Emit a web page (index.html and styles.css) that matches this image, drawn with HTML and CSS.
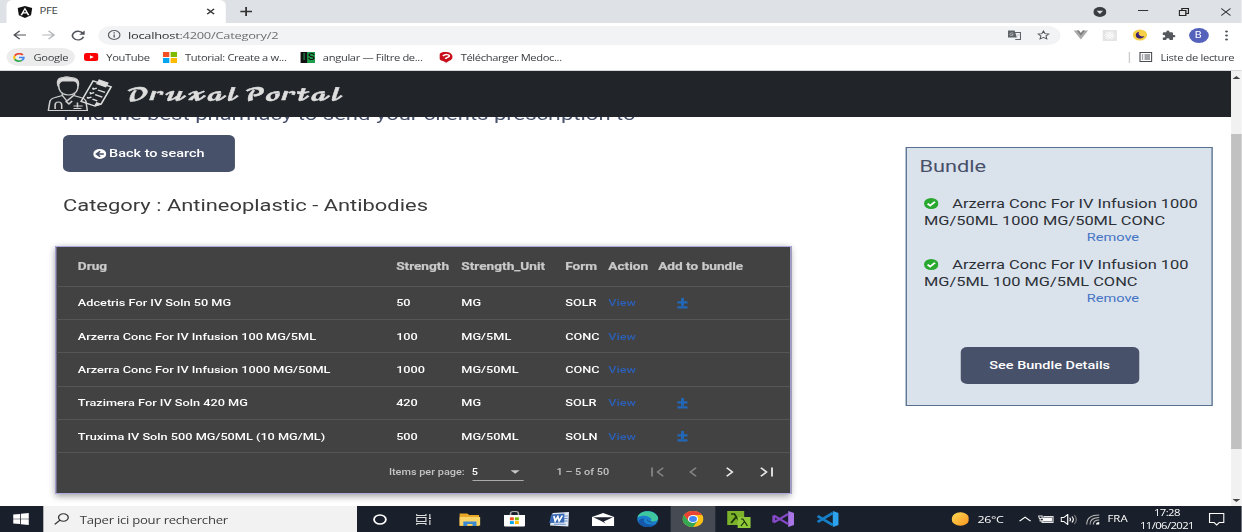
FILE: index.html
```html
<!DOCTYPE html>
<html lang="fr">
<head>
<meta charset="utf-8">
<title>PFE</title>
<link rel="stylesheet" href="styles.css">
</head>
<body>
<div class="screen">
  <header class="tabs">
    <div class="tab">
      <svg class="tab-logo" width="12" height="12" viewBox="0 0 24 24"><path d="M12 0 1 4l1.700 14.500L12 24l9.300-5.500L23 4z" fill="#111"/><path d="M12 3 5 18.500h2.800l1.400-3.500h5.600l1.400 3.500H19zm0 5.200 1.900 4.500h-3.800z" fill="#fff"/></svg>
      <span class="tab-title">PFE</span>
      <svg class="tab-close" width="7" height="7" viewBox="0 0 8 8"><path d="m1 1 6 6M7 1 1 7" stroke="#333" stroke-width="1.500"/></svg>
    </div>
    <svg class="tab-new" width="9" height="11" viewBox="0 0 10 10"><path d="M5 0v10M0 5h10" stroke="#333" stroke-width="1.500"/></svg>
    <div class="window-controls">
      <svg width="10" height="10" viewBox="0 0 12 12"><circle cx="6" cy="6" r="6" fill="#3a3d42"/><path d="M3 4.500h6L6 8.500z" fill="#dee1e6"/></svg>
      <svg width="8" height="10" viewBox="0 0 8 10"><path d="M0 3.500h8" stroke="#333"/></svg>
      <svg width="8" height="8" viewBox="0 0 8 8"><path d="M.5 2.500h5v5h-5zM2.500 2.500v-2h5v5h-2" fill="none" stroke="#222"/></svg>
      <svg width="8" height="8" viewBox="0 0 8 8"><path d="m.5.5 7 7M7.500.5l-7 7" stroke="#222" stroke-width=".9"/></svg>
    </div>
  </header>

  <div class="toolbar">
    <svg width="10" height="10" viewBox="0 0 10 10"><path d="M9.800 5H1M5 .8.800 5 5 9.200" fill="none" stroke="#50545a" stroke-width="1.200"/></svg>
    <svg width="10" height="10" viewBox="0 0 10 10"><path d="M.2 5H9M5 .8 9.200 5 5 9.200" fill="none" stroke="#b4b6b9" stroke-width="1.200"/></svg>
    <svg width="11" height="11" viewBox="0 0 11 11"><path d="M9.300 3.600A4.300 4.300 0 1 0 9.600 6.800" fill="none" stroke="#50545a" stroke-width="1.300"/><path d="M10.500.6v4.200H6.300z" fill="#50545a"/></svg>
    <div class="address">
      <svg width="10" height="10" viewBox="0 0 10 10"><circle cx="5" cy="5" r="4.400" fill="none" stroke="#5f6368"/><path d="M5 4.400v3M5 2.300v1.200" stroke="#5f6368" stroke-width="1.100"/></svg>
      <span class="url">localhost<span class="url-path">:4200/Category/2</span></span>
      <svg class="translate" width="10" height="10" viewBox="0 0 10 10"><path d="M3.500 2.500h6v7h-4" fill="#f1f3f4" stroke="#5f6368" stroke-width=".8"/><path d="M0 .5h5l1.800 7H0z" fill="#5f6368"/><path d="M4 3H2.500a1.300 1.300 0 1 0 1.400 1.500H2.800M6.500 5h2.300M7.600 4.200c0 1.600-.5 2.500-1.300 3.200" fill="none" stroke="#c8cacc" stroke-width=".6"/></svg>
      <svg width="10" height="10" viewBox="0 0 24 24"><path d="m12 2.500 2.900 6.300 6.900.8-5.100 4.700 1.400 6.900-6.100-3.500-6.100 3.500 1.400-6.900L2.200 9.600l6.900-.8z" fill="none" stroke="#50545a" stroke-width="2"/></svg>
    </div>
    <div class="extensions">
      <svg width="11" height="10" viewBox="0 0 11 10"><path d="M0 .5h3.800l1.700 3 1.700-3H11l-5.500 9z" fill="#aaa"/><path d="M2.400.5h1.700l1.400 2.400L6.900.5h1.700L5.500 5.800z" fill="#7e7e7e"/></svg>
      <svg width="11" height="11" viewBox="0 0 11 11"><path d="M0 0h11v11H0z" fill="#e4e4e4"/><circle cx="5.500" cy="5.500" r="1" fill="#fff"/><g fill="none" stroke="#fff" stroke-width=".6"><ellipse cx="5.500" cy="5.500" rx="4" ry="1.600"/><ellipse cx="5.500" cy="5.500" rx="4" ry="1.600" transform="rotate(60 5.500 5.500)"/><ellipse cx="5.500" cy="5.500" rx="4" ry="1.600" transform="rotate(120 5.500 5.500)"/></g></svg>
      <svg width="11" height="12" viewBox="0 0 12 12"><circle cx="6" cy="6" r="6" fill="#f5cf45"/><path d="M5.500 2.500A3.700 3.700 0 1 0 9.800 7.200 3.300 3.300 0 0 1 5.500 2.500z" fill="#3c1f6e"/></svg>
      <svg width="11" height="11" viewBox="0 0 24 24"><path d="M20.500 11H19V7a2 2 0 0 0-2-2h-4V3.500a2.500 2.500 0 0 0-5 0V5H4a2 2 0 0 0-2 2v3.800h1.500a2.700 2.700 0 0 1 0 5.400H2V20a2 2 0 0 0 2 2h3.800v-1.500a2.700 2.700 0 0 1 5.400 0V22H17a2 2 0 0 0 2-2v-4h1.500a2.500 2.500 0 0 0 0-5z" fill="#55585d"/></svg>
      <span class="avatar">B</span>
      <svg class="menu" width="3" height="11" viewBox="0 0 3 11"><g fill="#50545a"><circle cx="1.500" cy="1.500" r="1.100"/><circle cx="1.500" cy="5.500" r="1.100"/><circle cx="1.500" cy="9.500" r="1.100"/></g></svg>
    </div>
  </div>

  <nav class="bookmarks">
    <a class="bookmark google"><svg width="9" height="9" viewBox="0 0 18 18"><g fill="none" stroke-width="3.200"><path d="M14.800 4A7.300 7.300 0 0 0 2.600 5.500" stroke="#ea4335"/><path d="M2.600 5.500a7.300 7.300 0 0 0 0 7" stroke="#fbbc05"/><path d="M2.600 12.500A7.300 7.300 0 0 0 13.800 14.500" stroke="#34a853"/><path d="M13.800 14.500A7 7 0 0 0 16.200 9H9" stroke="#4285f4"/></g></svg><span>Google</span></a>
    <a class="bookmark youtube"><svg width="11" height="8" viewBox="0 0 22 16"><rect width="22" height="16" rx="4" fill="#f00"/><path d="m9 4.500 6 3.500-6 3.500z" fill="#fff"/></svg><span>YouTube</span></a>
    <a class="bookmark tutorial"><svg width="11" height="11" viewBox="0 0 11 11"><path d="M0 0h5v5H0z" fill="#f25022"/><path d="M6 0h5v5H6z" fill="#7fba00"/><path d="M0 6h5v5H0z" fill="#00a4ef"/><path d="M6 6h5v5H6z" fill="#ffb900"/></svg><span>Tutorial: Create a w...</span></a>
    <a class="bookmark angular"><span class="is-badge"><i>I</i><b>S</b></span><span>angular — Filtre de...</span></a>
    <a class="bookmark medoc"><svg width="10" height="11" viewBox="0 0 10 11"><path d="M5 0a5 4.700 0 0 1 2 8.900L5 10.800 3 9.300A5 4.700 0 0 1 5 0z" fill="#c8101c"/><path d="M2.500 4C4 2 7.500 2.200 7.300 4S4.500 5 4.500 7" fill="none" stroke="#fff" stroke-width="1.400"/></svg><span>Télécharger Medoc...</span></a>
    <span class="reading"><svg width="10" height="10" viewBox="0 0 10 10"><path d="M.5.5h9v9h-9zM2 3h1M2 5h1M2 7h1M4 3h4.200M4 5h4.200M4 7h4.200" fill="none" stroke="#4a4d52"/></svg><span>Liste de lecture</span></span>
  </nav>

  <div class="viewport">
    <div class="page">
      <div class="navbar">
        <svg width="50" height="36" viewBox="0 0 50 36" preserveAspectRatio="none"><g fill="none" stroke="#cfcfcf" stroke-width="1.200" stroke-linejoin="round"><path d="M.8 34.500 2 25.500q.7-3 4-4l5.500-2 3.500 5.500 5-5.500 5.500 2q3.300 1 4 4l1 9z"/><path d="M11.500 19.500v-3M20.700 19.500v-3M8.700 9q0 6 3 8.500 4.600 3 9 0 2.800-2.500 2.800-8.500"/><path d="M8.300 10Q6.500 2 12 1.700q2.500-1.500 6 0Q25 2 23.500 10q-.5-4.500-3-5h-9q-2.500 1-3.200 5z" fill="#dcdcdc"/><path d="M14 25l2.500 3 2.500-3M6 33v-4q0-3 2.500-3t2.500 3v4M23 26.500v5M20 30h7M20 32.500h6"/></g><g transform="translate(36 2.500) rotate(24)" fill="none" stroke="#dcdcdc" stroke-width="1.300"><path d="M0 2.500h15v19L11.500 25H0z"/><path d="M4 0h7v4H4zM11.500 25v-3.500H15" fill="#dcdcdc"/><path d="m2.500 9 1 1 2-2M7 9.500h6M2.500 14l1 1 2-2M7 14.500h6M2.500 19l1 1 2-2M7 19.500h4"/></g></svg>
        <span class="brand">𝓓𝓻𝓾𝔁𝓪𝓵 𝓟𝓸𝓻𝓽𝓪𝓵</span>
      </div>
      <div class="content">
        <main class="results">
          <h1 class="headline">Find the best pharmacy to send your clients prescription to</h1>
          <button class="btn back"><svg width="10" height="10" viewBox="0 0 16 16"><circle cx="8" cy="8" r="8" fill="#fff"/><path d="M13 8H4.500M8.500 3.500 4 8l4.500 4.500" fill="none" stroke="#48516a" stroke-width="2.200"/></svg><span>Back to search</span></button>
          <h2 class="category">Category : Antineoplastic - Antibodies</h2>
          <section class="drugs">
            <div class="row head"><span>Drug</span><span>Strength</span><span>Strength_Unit</span><span>Form</span><span>Action</span><span>Add to bundle</span></div>
            <div class="row"><span>Adcetris For IV Soln 50 MG</span><span>50</span><span>MG</span><span>SOLR</span><a>View</a><svg class="add" width="8" height="11" viewBox="0 0 8 11"><path d="M4 0v8M0 4.300h8M0 9.300h8" stroke="#2368b8" stroke-width="2.200"/></svg></div>
            <div class="row"><span>Arzerra Conc For IV Infusion 100 MG/5ML</span><span>100</span><span>MG/5ML</span><span>CONC</span><a>View</a></div>
            <div class="row"><span>Arzerra Conc For IV Infusion 1000 MG/50ML</span><span>1000</span><span>MG/50ML</span><span>CONC</span><a>View</a></div>
            <div class="row"><span>Trazimera For IV Soln 420 MG</span><span>420</span><span>MG</span><span>SOLR</span><a>View</a><svg class="add" width="8" height="11" viewBox="0 0 8 11"><path d="M4 0v8M0 4.300h8M0 9.300h8" stroke="#2368b8" stroke-width="2.200"/></svg></div>
            <div class="row"><span>Truxima IV Soln 500 MG/50ML (10 MG/ML)</span><span>500</span><span>MG/50ML</span><span>SOLN</span><a>View</a><svg class="add" width="8" height="11" viewBox="0 0 8 11"><path d="M4 0v8M0 4.300h8M0 9.300h8" stroke="#2368b8" stroke-width="2.200"/></svg></div>
            <div class="pager">
              <span class="per-page">Items per page:</span>
              <span class="select"><span>5</span><svg width="7" height="4" viewBox="0 0 8 4"><path d="M0 0h8L4 4z" fill="#c8c8c8"/></svg></span>
              <span class="range">1 – 5 of 50</span>
              <svg class="off" width="10" height="10" viewBox="0 0 10 10"><path d="M.8.500v9M9.300.700 5 5l4.300 4.300"/></svg>
              <svg class="off prev" width="6" height="10" viewBox="0 0 6 10"><path d="M5.300.700 1 5l4.300 4.300"/></svg>
              <svg width="6" height="10" viewBox="0 0 6 10"><path d="M.7.700 5 5 .700 9.300"/></svg>
              <svg class="last" width="10" height="10" viewBox="0 0 10 10"><path d="M.7.700 5 5 .700 9.300M9.200.500v9"/></svg>
            </div>
          </section>
        </main>
        <aside class="bundle">
          <h2 class="bundle-title">Bundle</h2>
          <div class="item"><svg width="11" height="11" viewBox="0 0 16 16"><circle cx="8" cy="8" r="8" fill="#28a82e"/><path d="m4 8.200 2.800 2.800L12.200 5.500" fill="none" stroke="#fff" stroke-width="2.300"/></svg>Arzerra Conc For IV Infusion 1000<br>MG/50ML 1000 MG/50ML CONC</div>
          <a class="remove">Remove</a>
          <div class="item"><svg width="11" height="11" viewBox="0 0 16 16"><circle cx="8" cy="8" r="8" fill="#28a82e"/><path d="m4 8.200 2.800 2.800L12.200 5.500" fill="none" stroke="#fff" stroke-width="2.300"/></svg>Arzerra Conc For IV Infusion 100<br>MG/5ML 100 MG/5ML CONC</div>
          <a class="remove">Remove</a>
          <button class="btn details">See Bundle Details</button>
        </aside>
      </div>
    </div>
    <div class="scrollbar">
      <svg width="6" height="3" viewBox="0 0 6 3"><path d="m0 3 3-3 3 3z" fill="#444"/></svg>
      <span class="thumb"></span>
      <svg width="6" height="3" viewBox="0 0 6 3"><path d="m0 0 3 3 3-3z" fill="#444"/></svg>
    </div>
  </div>

  <footer class="taskbar">
    <span class="start"><svg width="12" height="12" viewBox="0 0 12 12"><path d="M0 1.600 5.300.900v4.800H0zM5.900.8 12 0v5.700H5.900zM0 6.300h5.300v4.800L0 10.400zM5.900 6.300H12V12l-6.100-.8z" fill="#fff"/></svg></span>
    <span class="search"><svg width="12" height="12" viewBox="0 0 12 12"><circle cx="7.300" cy="4.500" r="3.700" fill="none" stroke="#333"/><path d="M4.700 7.200.700 11.300" stroke="#333" stroke-width="1.100"/></svg><span>Taper ici pour rechercher</span></span>
    <div class="apps">
      <span><svg width="11" height="11" viewBox="0 0 11 11"><circle cx="5.500" cy="5.500" r="4.500" fill="none" stroke="#fff" stroke-width="1.400"/></svg></span>
      <span><svg width="12" height="11" viewBox="0 0 12 11"><path d="M.5 0v1.500h7V0M.5 11V9.500h7V11M.5 3.500h7v4h-7zM10.500 0v3M10.500 6v5" fill="none" stroke="#ddd" stroke-width=".9"/><path d="M9.800 3.500h1.500V5H9.800z" fill="#fff"/></svg></span>
      <span><svg width="16" height="13" viewBox="0 0 16 13"><path d="M0 .5h6l1.500 1.500H15V13H0z" fill="#e9a827"/><path d="M0 4h16v8.500H0z" fill="#fbd467"/><path d="M3 13V8.500h10V13h-3v-2H6v2z" fill="#3b87d0"/></svg></span>
      <span><svg width="16" height="16" viewBox="0 0 16 16"><path d="M5 5V2.500q0-2 3-2t3 2V5" fill="none" stroke="#aaa" stroke-width="1.200"/><path d="M0 4h16v10.500q0 1-1 1H1q-1 0-1-1z" fill="#fff"/><path d="M4.500 6.300h3v3h-3z" fill="#f25022"/><path d="M8.300 6.300h3v3h-3z" fill="#7fba00"/><path d="M4.500 10.100h3v3h-3z" fill="#00a4ef"/><path d="M8.300 10.100h3v3h-3z" fill="#ffb900"/></svg></span>
      <span><svg width="16" height="15" viewBox="0 0 16 15"><path d="M3 1 15.500 0 15 14.500 1 13.500z" fill="#dfe8f5"/><path d="M12 4h2.500M12 6.500h2.500M12 9h2.500M4 12.300h9" stroke="#6f8fc6"/><path d="M2 2.500 12 1.500v9L.5 11z" fill="#3768b4"/><path d="m4 4 1 5L7 4.500 8 9 10.500 3.500" fill="none" stroke="#fff" stroke-width="1.300"/></svg></span>
      <span><svg width="17" height="13" viewBox="0 0 17 13"><path d="M0 4 8.500 0 17 4v9H0z" fill="#fff"/><path d="M1 4.300h15L9 8.500l1.500 2-3.800-2.800z" fill="#1b202c"/></svg></span>
      <span><svg width="17" height="16" viewBox="0 0 17 16"><circle cx="8.500" cy="8" r="8" fill="#1a7fd0"/><path d="M.7 6.500C2-1.500 14-2 16.400 6.500c.6 3.500-2.400 4.500-5.900 4 3-4-5-8-9.800-4z" fill="#3fc8a0"/><path d="M6 7.500c-2 5 3 7.500 8.500 5.700C11.500 17 5 17 2.500 13S3 7 6 7.500z" fill="#1558a8"/><path d="M16.500 9.500C14.500 12 8 12 8 8c.5 2 2 3 4.500 3 2 0 3-.5 4-1.500z" fill="#1b202c"/></svg></span>
      <span class="active"><svg width="16" height="16" viewBox="0 0 16 16"><circle cx="8" cy="8" r="8" fill="#fbc116"/><path d="M1.070 4A8 8 0 0 1 14.900 4H8v4L4.500 10z" fill="#ea4335"/><path d="M1.070 4A8 8 0 0 0 8 16l3.500-6L8 8l-3.500 2z" fill="#34a853"/><circle cx="8" cy="8" r="3.900" fill="#fff"/><circle cx="8" cy="8" r="3" fill="#4285f4"/></svg></span>
      <span class="npp"><svg width="18" height="17" viewBox="0 0 18 17"><path d="M0 0h13v14H0z" fill="#7cb32b"/><path d="M3 3h2.500l4.500 9M6.500 6.500 3 12" fill="none" stroke="#1d3608" stroke-width="1.400"/><path d="M8 6h10v11H8z" fill="#8fc93a"/><path d="M10.500 8H12l3.500 7M13 11l-2.500 4" fill="none" stroke="#1d3608"/></svg></span>
      <span><svg width="17" height="16" viewBox="0 0 17 16"><path d="m12.500 0 4.500 2v12l-4.500 2z" fill="#a875e6"/><path d="m1.500 4.500 11 8.500M1.500 11.500l11-8.500M1.500 4.500v7" fill="none" stroke="#8549c8" stroke-width="2.200"/></svg></span>
      <span><svg width="17" height="16" viewBox="0 0 17 16"><path d="m12.500 0 4.500 2v12l-4.500 2z" fill="#2da2ed"/><path d="m1 5 11.500 9M1 11l11.500-9" fill="none" stroke="#1580c8" stroke-width="2.300"/></svg></span>
    </div>
    <div class="tray">
      <svg width="13.500" height="14" viewBox="0 0 14 14"><defs><linearGradient id="sun" x1="0" y1="0" x2="1" y2="1"><stop offset="0" stop-color="#ffdc55"/><stop offset="1" stop-color="#f7921e"/></linearGradient></defs><circle cx="7" cy="7" r="7" fill="url(#sun)"/></svg>
      <span class="temp">26°C</span>
      <svg width="10" height="6" viewBox="0 0 10 6"><path d="m.8 5.200 4.200-4 4.200 4" fill="none" stroke="#fff"/></svg>
      <svg class="battery" width="12" height="9" viewBox="0 0 12 9"><path d="M3.500 2.500h7v4h-7z" fill="#fff"/><path d="M4 1.500h7.300v6H3V5M0 1h3v2.500H1zM1.500 3.500V6H4" fill="none" stroke="#e4e4e4" stroke-width=".9"/></svg>
      <svg width="13" height="11" viewBox="0 0 13 11"><path d="M.5 3.500h2l3-3v10l-3-3h-2zM7 3.800q1.200 1.700 0 3.400M8.700 2.500q2.200 3 0 6" fill="none" stroke="#fff" stroke-width=".9"/><path d="M10.500 1q3.200 4.500 0 9" fill="none" stroke="#777" stroke-width=".9"/></svg>
      <svg width="11" height="11" viewBox="0 0 11 11"><path d="M1 10.500Q1 1 10.500 1M3.500 10.500Q3.500 3.500 10.500 3.500M6 10.500Q6 6 10.500 6" fill="none" stroke="#bbb" stroke-width=".8"/><path d="M8 10.500Q8 8 10.500 8v2.500z" fill="#fff"/></svg>
      <span class="lang">FRA</span>
      <span class="clock"><span>17:28</span><span>11/06/2021</span></span>
      <svg width="12" height="13" viewBox="0 0 12 13"><path d="M.5.500h11v9H8L6 12 4 9.500H.5z" fill="none" stroke="#fff"/></svg>
    </div>
  </footer>
</div>
</body>
</html>
```
FILE: styles.css
```css
* { box-sizing: border-box; }

body {
  margin: 0;
  overflow: hidden;
  background: #fff;
}

/* The desktop is stretched horizontally to fill a wide display. */
.screen {
  width: calc(100vw / 1.3125);
  height: 532px;
  display: flex;
  flex-direction: column;
  transform: scaleX(1.3125);
  transform-origin: 0 0;
  font-family: "Open Sans", "Noto Sans", sans-serif;
  font-size: 9px;
  color: #3c4043;
  white-space: nowrap;
}

svg { display: block; flex: none; }

.tabs { height: 23px; flex: none; display: flex; align-items: center; background: #dee1e6; padding-left: 4.600px; }
.tab { width: 167.600px; height: 23px; display: flex; align-items: center; padding: 0 8px 0 8.600px; background: #fff; border-radius: 5px 5px 0 0; }
.tab-title { margin: -1px 0 0 5px; font-size: 8.700px; letter-spacing: -.3px; }
.tab-close { margin-left: auto; }
.tab-new { margin-left: 11px; }
.window-controls { margin-left: auto; display: flex; align-items: center; gap: 23.500px; padding-right: 8.500px; height: 20px; }

.toolbar { height: 24px; flex: none; display: flex; align-items: center; gap: 12px; padding-left: 9.500px; }
.address { width: 733px; height: 19px; margin-left: -2px; padding: 0 7.500px 0 7.500px; display: flex; align-items: center; border-radius: 10px; background: #f1f3f4; }
.url { margin-left: 5.500px; font-size: 9.800px; letter-spacing: -.2px; color: #303336; }
.url-path { color: #6b6f73; }
.translate { margin-left: auto; margin-right: 12px; }
.extensions { display: flex; align-items: center; gap: 11.500px; margin-left: -2px; }
.avatar { width: 15px; height: 15px; margin: 0 -2px; border-radius: 50%; background: #5462bb; color: #fff; font: 8.500px/15px Roboto, sans-serif; text-align: center; }
.menu { margin-left: 3px; }

.bookmarks { height: 24px; flex: none; display: flex; align-items: center; border-bottom: 1px solid #d5d7da; font-size: 8.500px; letter-spacing: -.27px; padding: 0 6px 3px 5.300px; }
.bookmark { display: flex; align-items: center; gap: 6px; }
.google { width: 52px; height: 18px; padding-left: 5px; gap: 6.300px; border-radius: 9px; background: #ececec; }
.youtube { width: 60px; margin-left: 6.700px; }
.tutorial { width: 105px; }
.angular { width: 106px; }
.is-badge { width: 11px; height: 11px; display: flex; font: 9px/11px Roboto, sans-serif; letter-spacing: 0; background: #111; text-align: center; }
.is-badge i, .is-badge b { flex: 1; }
.is-badge i { color: #1e8a4c; font-style: normal; }
.is-badge b { background: #20a04e; color: #111; font-weight: 500; }
.reading { margin-left: auto; display: flex; align-items: center; gap: 6px; border-left: 1px solid #ccc; padding-left: 7.500px; height: 11px; }
.reading svg { margin-left: 0; }

.viewport { height: 435px; flex: none; display: flex; font-family: Roboto, sans-serif; }
.page { width: 938px; overflow: hidden; display: flex; flex-direction: column; }
.navbar { height: 46px; flex: none; position: relative; z-index: 1; display: flex; align-items: center; background: #212529; padding-left: 35.500px; }
.brand { margin: 3px 0 0 10.500px; font-size: 17px; letter-spacing: -1.150px; -webkit-text-stroke: .4px #dedede; font-family: "DejaVu Math TeX Gyre", "DejaVu Serif", serif; color: #dedede; }

.content { display: flex; align-items: flex-start; }
.results { width: 689.500px; padding-left: 48px; }
.headline { margin: -13.500px 0 0; height: 31.500px; font-size: 16.800px; line-height: 20px; font-weight: 400; color: #48516a; }
.btn { border: 0; border-radius: 5px; background: #48516a; color: #fff; font: 500 11px/1 Roboto, sans-serif; display: flex; align-items: center; justify-content: center; padding: 0; }
.back { width: 130.500px; height: 37px; gap: 2.500px; }
.category { margin: 24px 0 0; height: 50px; font-size: 16.700px; line-height: 20px; font-weight: 400; color: #3b3b3b; }

.drugs { width: 561px; height: 248px; margin-left: -5.700px; background: #424242; border: 1px solid #aca9e0; box-shadow: 0 2px 6px rgba(0, 0, 0, .4); color: #fff; }
.row { height: 33.400px; display: grid; grid-template-columns: 242.500px 49.700px 79.200px 32.800px 38px 1fr; align-items: center; padding-left: 16px; border-bottom: 1px solid #555; font-size: 9.700px; font-weight: 500; }
.head { height: 39.500px; font-size: 10.400px; font-weight: 700; -webkit-text-stroke: .2px #c9c9c9; color: #c9c9c9; }
.row a { color: #2c5fb5; font-weight: 500; }
.add { margin: 1px 0 0 14.500px; }
.pager { height: 38px; display: flex; align-items: center; color: #c4c4c4; font-size: 8.300px; font-weight: 500; padding-left: 253px; }
.pager > span { flex: none; }
.select { width: 39px; height: 17px; margin-left: 5.500px; padding-right: 3px; display: flex; align-items: center; justify-content: space-between; border-bottom: 1px solid #aaa; color: #fff; }
.range { width: 71.500px; margin-left: 25.500px; }
.pager > svg { fill: none; stroke: #e8e8e8; stroke-width: 1.400; margin-right: 19.500px; }
.pager > .off { stroke: #828282; }
.pager > .prev { margin-right: 22px; }
.pager > .last { margin-right: 0; }

.bundle { width: 234.700px; height: 259px; margin-top: 30px; padding: 8px 10px 0; display: flex; flex-direction: column; border: 1px solid #57708f; background: #dae2ec; }
.bundle-title { margin: 0 0 17px; font-size: 16.600px; line-height: 22px; font-weight: 400; color: #48506a; }
.item { padding-left: 3.500px; font-size: 12.500px; line-height: 17px; color: #2c3036; }
.item svg { display: inline-block; vertical-align: -1px; margin-right: 10.500px; }
.remove { margin: 0 0 10px 127.500px; font-size: 11.100px; line-height: 17px; color: #4474c4; }
.details { width: 136.500px; height: 37px; margin: 29.500px 0 0 31px; }

.scrollbar { width: 8.300px; display: flex; flex-direction: column; align-items: center; background: #f1f1f1; padding: 5px 0 4px; }
.thumb { width: 7.300px; height: 315px; margin: 55px 0 auto; background: #c1c1c1; }

.taskbar { height: 26px; flex: none; display: flex; align-items: center; background: #1a202b; color: #fff; }
.start { width: 33.300px; display: flex; justify-content: center; padding-right: 1.500px; }
.search { width: 239px; height: 26px; padding-left: 8px; display: flex; align-items: center; gap: 7.500px; background: #f2f2f2; color: #3c3c3c; font-size: 10px; letter-spacing: -.2px; }
.search span { margin-top: 2px; }
.apps { display: flex; }
.apps span { width: 34.100px; height: 26px; display: flex; align-items: center; justify-content: center; }
.apps .active { background: #464a53; }
.apps .npp { padding-left: 2px; }
.tray { margin-left: auto; padding-right: 13.500px; display: flex; align-items: center; gap: 6px; font-size: 9px; }
.temp { margin: 0 1px 0 .5px; width: 24px; font-size: 9.500px; letter-spacing: -.3px; }
.battery { margin-left: -1px; margin-right: -1px; }
.lang { width: 16px; font-size: 8.700px; }
.clock { width: 44px; margin: 1px 3.700px 0 1.300px; display: flex; flex-direction: column; align-items: center; line-height: 12.500px; font-size: 8.600px; letter-spacing: -.45px; }
```
